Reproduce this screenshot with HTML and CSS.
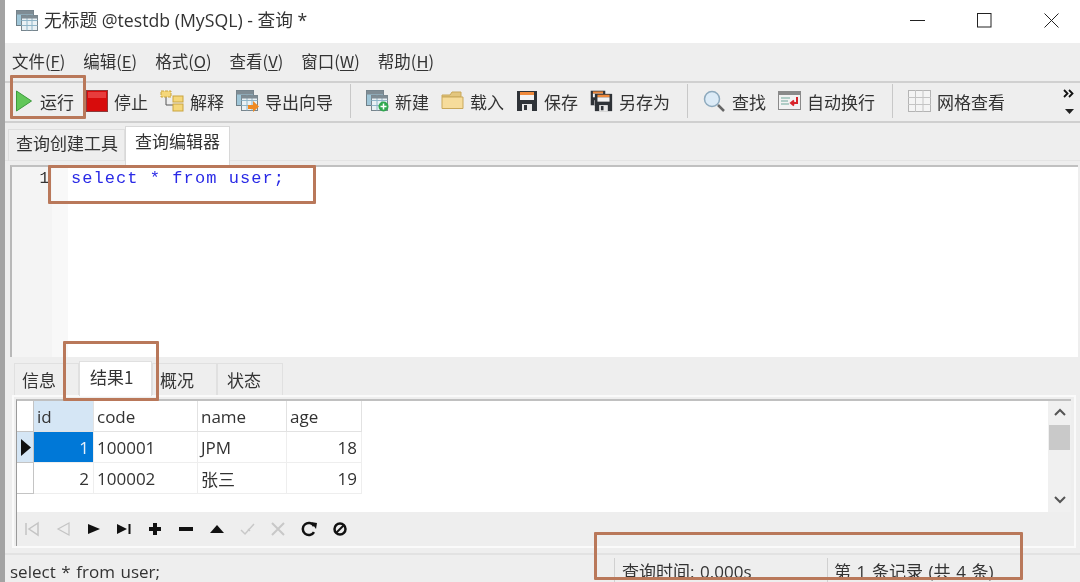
FILE: index.html
```html
<!DOCTYPE html>
<html lang="zh-CN">
<head>
<meta charset="utf-8">
<title>无标题 @testdb (MySQL) - 查询 *</title>
<link rel="stylesheet" href="styles.css">
</head>
<body>
<svg class="defs" width="0" height="0">
  <symbol id="tbl" viewBox="0 0 22 22">
    <rect x="0.5" y="0.5" width="17" height="15" fill="#9fc6d8" stroke="#6f7f88"/>
    <rect x="0.5" y="0.5" width="17" height="4" fill="#7f8c94"/>
    <rect x="5.5" y="5.5" width="16" height="15" fill="#e9f1f5" stroke="#77858d"/>
    <path d="M5.5 10.5h16M5.5 15.5h16M11 5.5v15M16 5.5v15" stroke="#8fb5c8"/>
    <rect x="5.5" y="5.5" width="16" height="3" fill="#7f8c94"/>
  </symbol>
  <symbol id="floppy" viewBox="0 0 22 22">
    <path d="M1 1h20v20H1z" fill="#2f3338"/>
    <rect x="4" y="2" width="14" height="3" fill="#f08a3c"/>
    <rect x="4" y="5" width="14" height="5" fill="#f3f3f3"/>
    <rect x="6" y="14" width="10" height="7" fill="#e8e8e8"/>
    <rect x="8" y="15" width="3" height="5" fill="#2f3338"/>
  </symbol>
</svg>

<div class="app">
  <header class="titlebar">
    <svg class="title-icon"><use href="#tbl"/></svg>
    <span class="title-text">无标题 @testdb (MySQL) - 查询 *</span>
    <div class="winbtns">
      <svg width="15" height="15" viewBox="0 0 15 15"><path d="M0 7.5h15" stroke="#222"/></svg>
      <svg width="15" height="15" viewBox="0 0 15 15"><rect x="0.5" y="0.5" width="13.5" height="13.5" fill="none" stroke="#222"/></svg>
      <svg width="15" height="15" viewBox="0 0 15 15"><path d="M0.5 0.5l14 14M14.5 0.5l-14 14" stroke="#222"/></svg>
    </div>
  </header>

  <nav class="menubar">
    <span class="menu">文件(<u>F</u>)</span>
    <span class="menu">编辑(<u>E</u>)</span>
    <span class="menu">格式(<u>O</u>)</span>
    <span class="menu">查看(<u>V</u>)</span>
    <span class="menu">窗口(<u>W</u>)</span>
    <span class="menu">帮助(<u>H</u>)</span>
  </nav>

  <div class="toolbar">
    <div class="tool tool-run">
      <svg width="18" height="24" viewBox="0 0 18 24"><path d="M1.5 2l15 10-15 10z" fill="#62c75a" stroke="#3c9a3c"/></svg>
      <span>运行</span>
    </div>
    <div class="tool">
      <svg width="22" height="22" viewBox="0 0 22 22"><rect x="0.5" y="0.5" width="21" height="21" fill="#d80c0c" stroke="#8c3b3b"/><rect x="2" y="2" width="18" height="6" fill="#e83c3c"/></svg>
      <span>停止</span>
    </div>
    <div class="tool">
      <svg width="24" height="22" viewBox="0 0 24 22"><path d="M6 6v9h8" fill="none" stroke="#555"/><rect x="1" y="1" width="10" height="6" fill="#f5d77a" stroke="#c9a43f" stroke-dasharray="3 1"/><rect x="13" y="6" width="10" height="6" fill="#f5d77a" stroke="#c9a43f"/><rect x="13" y="14" width="10" height="7" fill="#f5d77a" stroke="#c9a43f"/></svg>
      <span>解释</span>
    </div>
    <div class="tool">
      <svg width="23" height="22" viewBox="0 0 23 22"><use href="#tbl" width="22" height="22"/><path d="M12 15h5v-4l6 5.500-6 5.500v-3h-5z" fill="#ef8a23"/></svg>
      <span>导出向导</span>
    </div>
    <i class="sep"></i>
    <div class="tool">
      <svg width="23" height="22" viewBox="0 0 23 22"><use href="#tbl" width="22" height="22"/><circle cx="17.500" cy="16.500" r="5" fill="#2fa84f"/><path d="M17.500 13.500v6M14.500 16.500h6" stroke="#fff" stroke-width="1.500"/></svg>
      <span>新建</span>
    </div>
    <div class="tool">
      <svg width="23" height="22" viewBox="0 0 23 22"><path d="M1 5h8l2-3h9v5H1z" fill="#e3c67e" stroke="#c9a85a"/><path d="M1 18.500V7h21v11.500z" fill="#f6dc9b" stroke="#c9a85a"/></svg>
      <span>载入</span>
    </div>
    <div class="tool">
      <svg width="22" height="22"><use href="#floppy"/></svg>
      <span>保存</span>
    </div>
    <div class="tool">
      <svg width="23" height="23" viewBox="0 0 23 23"><use href="#floppy" x="0" y="0" width="16" height="16"/><use href="#floppy" x="4" y="3" width="19" height="19"/></svg>
      <span>另存为</span>
    </div>
    <i class="sep"></i>
    <div class="tool">
      <svg width="23" height="23" viewBox="0 0 23 23"><circle cx="9" cy="9" r="7.500" fill="#dcebf7" stroke="#8da9bd" stroke-width="1.500"/><path d="M15 15l6 6" stroke="#666" stroke-width="2.500"/></svg>
      <span>查找</span>
    </div>
    <div class="tool">
      <svg width="23" height="20" viewBox="0 0 23 20"><rect x="0.500" y="0.500" width="22" height="18" fill="#f2f2f2" stroke="#8a8a8a"/><rect x="1" y="1" width="21" height="3" fill="#8a8a8a"/><path d="M3 7h9M3 10h7M3 13h8" stroke="#6ea79a"/><path d="M19 6v6h-5M16 9.500l-3 2.500 3 2.500" fill="none" stroke="#d8232a" stroke-width="2"/></svg>
      <span>自动换行</span>
    </div>
    <i class="sep"></i>
    <div class="tool">
      <svg width="23" height="22" viewBox="0 0 23 22"><rect x="0.500" y="0.500" width="22" height="21" fill="#f4f4f4" stroke="#b4b4b4"/><path d="M7.500 0v22M15 0v22M0 7.500h23M0 14.500h23" stroke="#c4c4c4"/></svg>
      <span>网格查看</span>
    </div>
    <div class="overflow">
      <svg width="12" height="9" viewBox="0 0 12 9"><path d="M1 1l3.500 3.500L1 8M6 1l3.500 3.500L6 8" fill="none" stroke="#111" stroke-width="1.800"/></svg>
      <svg width="9" height="5" viewBox="0 0 9 5"><path d="M0 0h9L4.500 5z" fill="#222"/></svg>
    </div>
  </div>

  <div class="tabs top-tabs">
    <span class="tab">查询创建工具</span>
    <span class="tab active">查询编辑器</span>
  </div>

  <section class="editor">
    <div class="gutter">1</div>
    <div class="fold"></div>
    <code class="sql">select * from user;</code>
  </section>

  <div class="tabs result-tabs">
    <span class="rtab">信息</span>
    <span class="rtab active">结果1</span>
    <span class="rtab">概况</span>
    <span class="rtab">状态</span>
  </div>

  <section class="results">
    <div class="grid-wrap">
      <div class="grid">
        <div class="c ind"></div><div class="c h sel-h">id</div><div class="c h">code</div><div class="c h">name</div><div class="c h">age</div>
        <div class="c ind sel-h"><svg width="10" height="17" viewBox="0 0 10 17"><path d="M0 0l10 8.500L0 17z" fill="#111"/></svg></div><div class="c num sel">1</div><div class="c">100001</div><div class="c">JPM</div><div class="c num">18</div>
        <div class="c ind"></div><div class="c num">2</div><div class="c">100002</div><div class="c">张三</div><div class="c num">19</div>
      </div>
      <div class="scroll">
        <svg width="14" height="9" viewBox="0 0 14 9"><path d="M2 7l5-5 5 5" fill="none" stroke="#555" stroke-width="2"/></svg>
        <div class="thumb"></div>
        <svg class="down" width="14" height="9" viewBox="0 0 14 9"><path d="M2 2l5 5 5-5" fill="none" stroke="#555" stroke-width="2"/></svg>
      </div>
    </div>
    <div class="navbar">
      <svg width="16" height="16" viewBox="0 0 16 16"><path d="M2 2v12M14 2L5 8l9 6z" fill="none" stroke="#c4c4c4" stroke-width="1.500"/></svg>
      <svg width="16" height="16" viewBox="0 0 16 16"><path d="M14 2L3 8l11 6z" fill="none" stroke="#c4c4c4" stroke-width="1.200"/></svg>
      <svg width="16" height="16" viewBox="0 0 16 16"><path d="M2 3l12 5-12 5z" fill="#111"/></svg>
      <svg width="16" height="16" viewBox="0 0 16 16"><path d="M1 3l10 5-10 5z" fill="#111"/><path d="M13.500 3v10" stroke="#111" stroke-width="2"/></svg>
      <svg width="16" height="16" viewBox="0 0 16 16"><path d="M8 2v12M2 8h12" stroke="#111" stroke-width="4"/></svg>
      <svg width="16" height="16" viewBox="0 0 16 16"><path d="M1 8h14" stroke="#111" stroke-width="4"/></svg>
      <svg width="16" height="16" viewBox="0 0 16 16"><path d="M1 12L8 4l7 8z" fill="#111"/></svg>
      <svg width="16" height="16" viewBox="0 0 16 16"><path d="M1 9l4 4 9-10M8 8l2 2" fill="none" stroke="#c8c8c8" stroke-width="1.500"/></svg>
      <svg width="16" height="16" viewBox="0 0 16 16"><path d="M2 2l12 12M14 2L2 14" stroke="#c8c8c8" stroke-width="2"/></svg>
      <svg width="16" height="16" viewBox="0 0 16 16"><path d="M13 5a6 6 0 1 0 0 6" fill="none" stroke="#111" stroke-width="2.500"/><path d="M10 1l6 1-1 6z" fill="#111"/></svg>
      <svg width="16" height="16" viewBox="0 0 16 16"><circle cx="8" cy="8" r="5.500" fill="none" stroke="#111" stroke-width="2.500"/><path d="M4 12L12 4" stroke="#111" stroke-width="2"/></svg>
    </div>
  </section>

  <footer class="status">
    <span class="st-sql">select * from user;</span>
    <span class="st-time">查询时间: 0.000s</span>
    <span class="st-rec">第 1 条记录 (共 4 条)</span>
  </footer>

  <i class="mark m-run"></i>
  <i class="mark m-sql"></i>
  <i class="mark m-tab"></i>
  <i class="mark m-status"></i>
</div>
</body>
</html>
```

FILE: styles.css
```css
* { box-sizing: border-box; }
html, body { margin: 0; height: 100%; overflow: hidden; }
body { background: #fff; }
.defs { position: absolute; }
.app {
  position: relative;
  width: 1080px;
  height: 582px;
  overflow: hidden;
  background: #eeeeee;
  border-left: 5px solid #a3a3a3;
  font-family: "Noto Sans CJK SC", "Open Sans", sans-serif;
  color: #333;
  filter: blur(0.45px);
  display: flex;
  flex-direction: column;
}
.titlebar {
  height: 43px;
  flex: none;
  background: #fff;
  display: flex;
  align-items: center;
  padding-left: 11px;
  font-family: "Open Sans", "Noto Sans CJK SC", sans-serif;
  font-size: 17.700px;
  color: #333;
}
.title-icon { width: 22px; height: 22px; margin-right: 6px; margin-top: -2px; }
.title-text { margin-top: -5px; }
.winbtns { margin-left: auto; display: flex; gap: 52px; padding-right: 21px; margin-top: -2px; }
.menubar {
  height: 38px;
  flex: none;
  display: flex;
  align-items: center;
  gap: 18px;
  padding-left: 7px;
  padding-bottom: 2px;
  font-size: 16.500px;
}
.menu u { text-underline-offset: 2px; }
.toolbar {
  height: 42px;
  flex: none;
  display: flex;
  align-items: center;
  padding: 0 0 2px 10px;
  border-top: 2px solid #d0d0d0;
  border-bottom: 2px solid #cfcfcf;
  font-size: 17px;
}
.tool { display: flex; align-items: center; gap: 6px; margin-right: 12px; white-space: nowrap; }
.tool-run { gap: 7px; margin-right: 12px; }
.tool svg { flex: none; }
.sep { width: 1px; height: 34px; background: #c8c8c8; margin: 0 15px 0 5px; flex: none; }
.overflow {
  margin-left: auto;
  margin-right: 5px;
  display: flex;
  flex-direction: column;
  align-items: center;
  gap: 11px;
}
.tabs { display: flex; flex: none; }
.top-tabs {
  height: 38px;
  padding-left: 3px;
  font-size: 17px;
  align-items: flex-end;
  border-bottom: 1px solid #e4e4e4;
}
.tab {
  height: 32px;
  padding: 0 0 6px 7px;
  display: flex;
  align-items: center;
  border: 1px solid #dedede;
  border-bottom: 0;
  margin-bottom: -1px;
  width: 117px;
  white-space: nowrap;
}
.tab.active {
  height: 39px;
  width: 105px;
  background: #fff;
  padding: 0 0 11px 9px;
  position: relative;
  z-index: 1;
  margin-bottom: -5px;
  border-color: #d8d8d8;
}
.editor {
  height: 192px;
  flex: none;
  margin: 4px 2px 0 5px;
  background: #fff;
  border-top: 2px solid #c0c0c0;
  border-left: 2px solid #b8b8b8;
  display: flex;
  align-items: flex-start;
}
.gutter {
  width: 40px;
  height: 100%;
  background: #f4f4f4;
  text-align: right;
  padding: 2px 3px 0 0;
  font: 16px/20px "Liberation Mono", monospace;
  color: #333;
}
.fold { width: 16px; height: 100%; background: #f8f8f8; }
.sql {
  margin: 2px 0 0 3px;
  font: 17px/20px "Liberation Mono", monospace;
  letter-spacing: 1.060px;
  color: #2a2ae6;
  white-space: pre;
}
.result-tabs {
  height: 38px;
  margin: 0 0 0 9px;
  padding-top: 6px;
  font-size: 17px;
}
.rtab {
  width: 65px;
  height: 33px;
  display: flex;
  align-items: center;
  padding: 0 0 2px 7px;
  border: 1px solid #e0e0e0;
  border-bottom: 0;
}
.rtab.active { width: 73px; height: 35px; margin-top: -2px; background: #fff; padding: 0 0 5px 10px; position: relative; z-index: 1; }
.rtab:last-child { width: 66px; padding-left: 9px; }
.results {
  flex: none;
  height: 153px;
  margin: 0 0 0 7px;
  width: 1064px;
  border: 2px solid #fafafa;
  padding: 2px 3px 0 2px;
  display: flex;
  flex-direction: column;
}
.grid-wrap {
  height: 113px;
  flex: none;
  background: #fff;
  display: flex;
  justify-content: space-between;
  border-top: 2px solid #c0c0c0;
  border-left: 1px solid #9a9a9a;
}
.grid {
  display: grid;
  grid-template-columns: 17px 60px 104px 89px 75px;
  grid-auto-rows: 31px;
  align-self: flex-start;
  font-family: "Open Sans", "Noto Sans CJK SC", sans-serif;
  font-size: 17px;
}
.c {
  border-right: 1px solid #eeeeee;
  border-bottom: 1px solid #eeeeee;
  padding: 0 3px;
  display: flex;
  align-items: center;
  color: #333;
}
.h { background: #fff; border-color: #e2e2e2; }
.sel-h { background: #d5e6f5; }
.ind { padding: 0 0 0 4px; border-color: #c4c4c4; }
.num { justify-content: flex-end; padding-right: 4px; }
.sel { background: #0078d7; color: #e6f1fb; }
.scroll {
  width: 23px;
  background: #f0f0f0;
  display: flex;
  flex-direction: column;
  align-items: center;
  padding-top: 7px;
}
.thumb { width: 21px; height: 25px; background: #c9c9c9; margin-top: 8px; }
.down { margin-top: auto; margin-bottom: 8px; }
.navbar {
  flex: 1;
  display: flex;
  align-items: center;
  gap: 14.800px;
  padding: 0 0 0 7px;
  border-left: 1px solid #9a9a9a;
}
.status {
  flex: 1;
  margin-top: 5px;
  border-top: 2px solid #e2e2e2;
  display: flex;
  font-family: "Open Sans", "Noto Sans CJK SC", sans-serif;
  font-size: 17px;
  line-height: 22px;
  word-spacing: 1.200px;
  padding-top: 3px;
  white-space: nowrap;
}
.status span { padding-top: 3px; }
.st-sql { width: 609px; padding-left: 5px; }
.st-time { width: 213px; padding-left: 7px; border-left: 1px solid #d0d0d0; }
.st-rec { padding-left: 6px; border-left: 1px solid #d0d0d0; }
.mark { position: absolute; border: 3px solid #b9785a; border-radius: 1px; z-index: 5; }
.m-run { left: 5px; top: 75px; width: 76px; height: 44px; }
.m-sql { left: 43px; top: 165px; width: 268px; height: 39px; }
.m-tab { left: 58px; top: 341px; width: 96px; height: 60px; }
.m-status { left: 589px; top: 532px; width: 429px; height: 48px; }
```
